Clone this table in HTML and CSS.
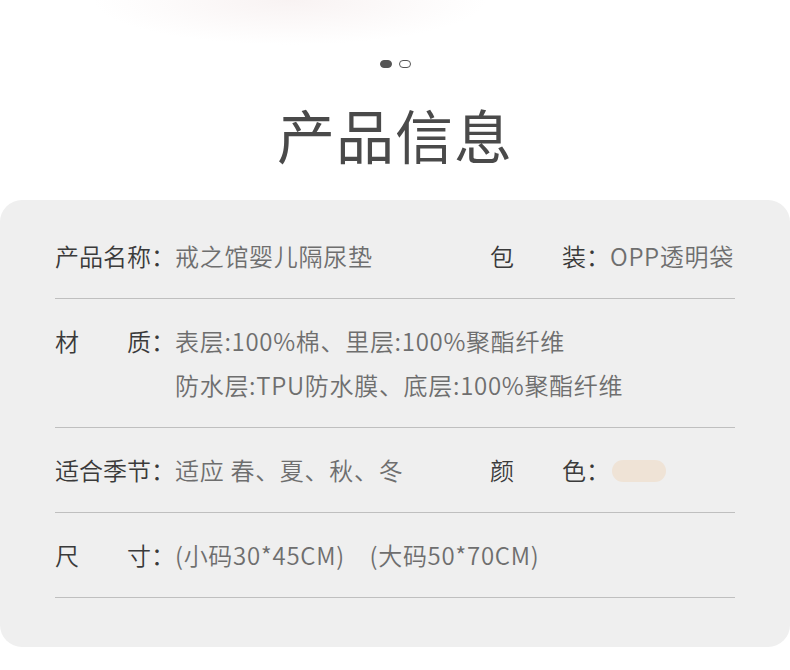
FILE: index.html
```html
<!DOCTYPE html>
<html lang="zh-CN">
<head>
<meta charset="UTF-8">
<meta name="viewport" content="width=device-width, initial-scale=1.0">
<title>产品信息</title>
<link rel="stylesheet" href="styles.css">
</head>
<body>
<div class="page">
    <div class="prev-shadow"></div>
    <div class="dots">
        <span class="dot active"></span>
        <span class="dot"></span>
    </div>
    <h1 class="title">产品信息</h1>

    <div class="info-card">
        <div class="info-row">
            <div class="cell">
                <div class="label"><span class="k"><i>产</i><i>品</i><i>名</i><i>称</i></span><span class="colon">：</span></div>
                <div class="value">戒之馆婴儿隔尿垫</div>
            </div>
            <div class="cell right">
                <div class="label"><span class="k"><i>包</i><i>装</i></span><span class="colon">：</span></div>
                <div class="value">OPP透明袋</div>
            </div>
        </div>
        <div class="info-row">
            <div class="cell">
                <div class="label"><span class="k"><i>材</i><i>质</i></span><span class="colon">：</span></div>
                <div class="value">
                    表层:100%棉、里层:100%聚酯纤维<br>
                    防水层:TPU防水膜、底层:100%聚酯纤维
                </div>
            </div>
        </div>
        <div class="info-row">
            <div class="cell">
                <div class="label"><span class="k"><i>适</i><i>合</i><i>季</i><i>节</i></span><span class="colon">：</span></div>
                <div class="value">适应 春、夏、秋、冬</div>
            </div>
            <div class="cell right">
                <div class="label"><span class="k"><i>颜</i><i>色</i></span><span class="colon">：</span></div>
                <div class="value"><span class="swatch"></span></div>
            </div>
        </div>
        <div class="info-row">
            <div class="cell">
                <div class="label"><span class="k"><i>尺</i><i>寸</i></span><span class="colon">：</span></div>
                <div class="value">(小码30*45CM)&emsp;(大码50*70CM)</div>
            </div>
        </div>
    </div>
</div>
</body>
</html>
```

FILE: styles.css
```css
body {
    margin: 0;
    background-color: #ffffff;
    font-family: "Noto Sans CJK SC", "Noto Sans", sans-serif;
}
.page {
    width: 790px;
}
.prev-shadow {
    height: 56px;
    margin: 0 295px 0 85px;
    background: radial-gradient(ellipse 60% 100% at 50% 0%, rgba(238, 224, 224, 0.4), rgba(255, 255, 255, 0) 80%);
}
.dots {
    display: flex;
    justify-content: center;
    gap: 7px;
    margin-top: 4px;
}
.dot {
    width: 12px;
    height: 8px;
    border-radius: 4px;
    border: 1.5px solid #555555;
    box-sizing: border-box;
}
.dot.active {
    background-color: #555555;
}
.title {
    margin: 26px 0 0;
    text-align: center;
    font-size: 58px;
    line-height: 80px;
    font-weight: 400;
    color: #4a4a4a;
    letter-spacing: 1px;
}
.info-card {
    margin-top: 26px;
    background-color: #efefef;
    border-radius: 22px;
    padding: 14px 55px 49px;
}
.info-row {
    display: flex;
    padding: 20px 0;
    border-bottom: 1px solid #bfbfbf;
    font-size: 24px;
    line-height: 44px;
    font-weight: 350;
}
.cell {
    display: flex;
    width: 435px;
}
.cell.right {
    width: auto;
}
.label {
    display: flex;
    width: 120px;
    flex-shrink: 0;
    color: #3a3a3a;
}
.label .k {
    display: flex;
    justify-content: space-between;
    width: 96px;
}
.label i {
    font-style: normal;
}
.colon {
    width: 24px;
}
.value {
    color: #6e6e6e;
    white-space: nowrap;
    letter-spacing: 0.7px;
}
.swatch {
    display: inline-block;
    width: 54px;
    height: 22px;
    margin-left: 2px;
    border-radius: 11px;
    background-color: #efe3d6;
    vertical-align: middle;
    position: relative;
    top: -2px;
}
```
